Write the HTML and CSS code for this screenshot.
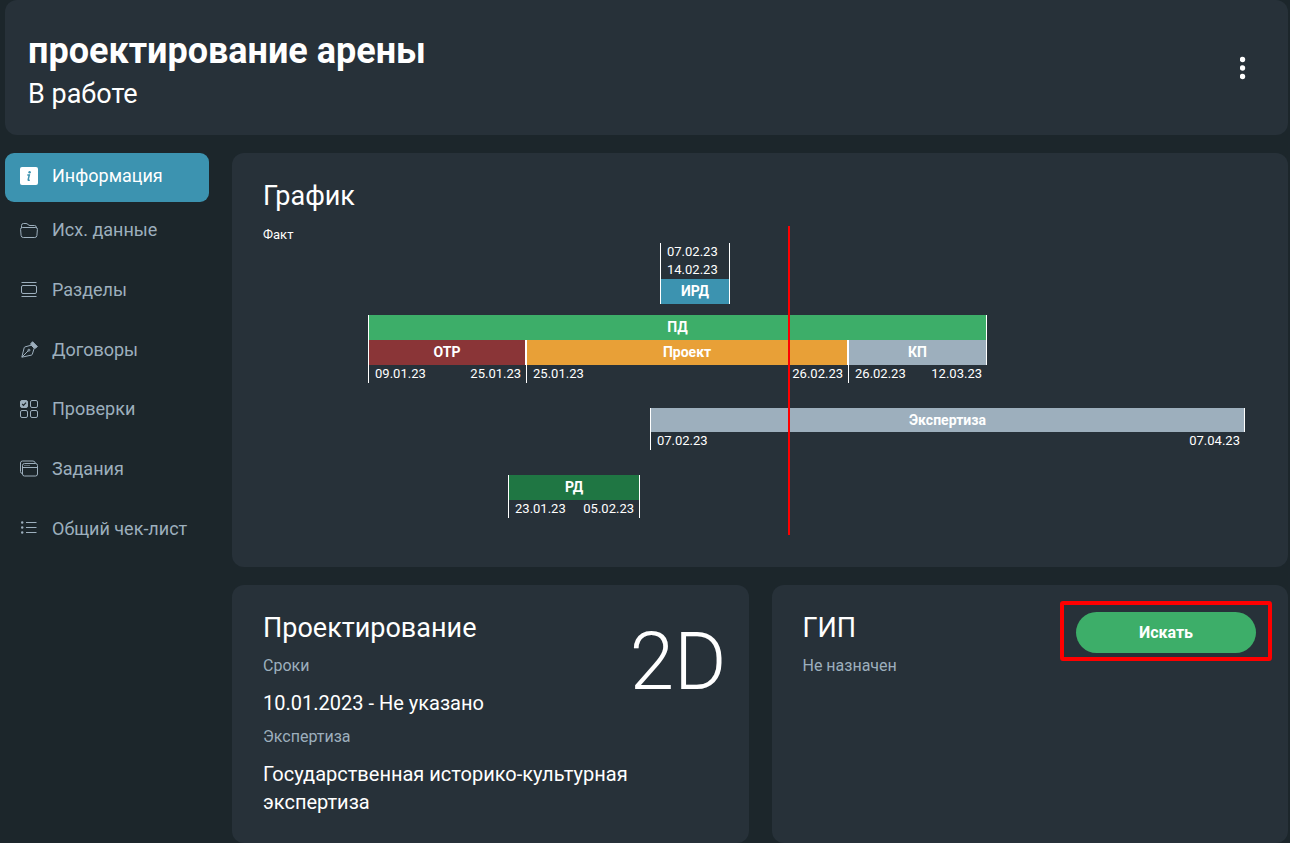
FILE: index.html
```html
<!DOCTYPE html>
<html lang="ru">
<head>
<meta charset="utf-8">
<meta name="viewport" content="width=device-width, initial-scale=1">
<title>проектирование арены</title>
<link rel="stylesheet" href="styles.css">
</head>
<body>
<div class="page">
  <header class="card header">
    <div>
      <h1 class="header-title">проектирование арены</h1>
      <p class="header-status">В работе</p>
    </div>
    <button class="menu-button" type="button" aria-label="Меню">
      <svg width="6" height="24" viewBox="0 0 6 24" fill="currentColor"><circle cx="2.500" cy="3.500" r="2.700"/><circle cx="2.500" cy="12" r="2.700"/><circle cx="2.500" cy="20.500" r="2.700"/></svg>
    </button>
  </header>

  <div class="layout">
    <nav class="nav">
      <a class="nav-item nav-item-active" href="#info">
        <svg class="icon" viewBox="0 0 18 18"><rect width="18" height="18" rx="2" fill="#fff"/><circle cx="9.600" cy="5.300" r="1.200" fill="#3c93b0"/><path d="M7.300 8h2l-1.100 4.600q-.2 1.100 1.500.4" fill="none" stroke="#3c93b0" stroke-width="1.500"/></svg>
        <span>Информация</span>
      </a>
      <a class="nav-item" href="#data">
        <svg class="icon" viewBox="0 0 18 18"><path d="M1.500 7V4.500Q1.500 2.500 3.500 2.500H6Q7 2.500 8 3.500T10 4.500H14.500Q16.500 4.500 16.500 7M2.300 6.500H15.700Q17.600 6.500 17.400 8.500L16.900 14.500Q16.700 16.500 14.700 16.500H3.300Q1.300 16.500 1.100 14.500L.6 8.500Q.4 6.500 2.300 6.500Z"/></svg>
        <span>Исх. данные</span>
      </a>
      <a class="nav-item" href="#sections">
        <svg class="icon" viewBox="0 0 18 18"><path d="M1.500 1.500H16.500M1.500 15.500H16.500"/><rect x="1.500" y="4.500" width="15" height="8" rx="1.500"/></svg>
        <span>Разделы</span>
      </a>
      <a class="nav-item" href="#contracts">
        <svg class="icon" viewBox="0 0 18 18"><path d="M1.800 16.200L4.200 6.700Q4.400 6.100 5 5.900L11.200 4.200L14.200 7.200L12.300 13.300Q12.100 13.900 11.500 14.100ZM2 16L8.500 9.500"/><circle cx="8.900" cy="9.200" r="1"/><path class="solid" d="M10.500 3.200L12.500.7L17.400 5.600L14.900 7.500Z"/></svg>
        <span>Договоры</span>
      </a>
      <a class="nav-item nav-item-short" href="#checks">
        <svg class="icon" viewBox="0 0 18 18"><rect class="solid" x=".5" y=".5" width="7" height="7" rx="1.500"/><path class="cutout" d="M2.200 4L3.500 5.300L6 2.600"/><rect x="10.500" y=".5" width="7" height="7" rx="1.500"/><rect x=".5" y="10.500" width="7" height="7" rx="1.500"/><rect x="10.500" y="10.500" width="7" height="7" rx="1.500"/></svg>
        <span>Проверки</span>
      </a>
      <a class="nav-item" href="#tasks">
        <svg class="icon" viewBox="0 0 18 18"><path d="M2.500 13.500Q.5 13.500.5 11.500V3Q.5 1 2.500 1H13Q15 1 15.500 3.500"/><rect x="2.500" y="3.500" width="15" height="12.500" rx="2"/><path d="M2.500 7.500H17.500M4.500 5.500H5.500M6.500 5.500H7.500M8.500 5.500H9.500"/></svg>
        <span>Задания</span>
      </a>
      <a class="nav-item" href="#checklist">
        <svg class="icon" viewBox="0 0 18 18"><path d="M6 2.500H16.500M6 7.500H16.500M6 12.500H16.500"/><g class="dots"><circle cx="2.200" cy="2.500" r="1.200"/><circle cx="2.200" cy="7.500" r="1.200"/><circle cx="2.200" cy="12.500" r="1.200"/></g></svg>
        <span>Общий чек-лист</span>
      </a>
    </nav>

    <main class="content">
      <section class="card schedule">
        <h2 class="card-title">График</h2>
        <div class="chart">
          <p class="chart-label">Факт</p>
          <div class="stage stage-framed stage-ird" style="margin-left:39.94%;width:7.05%">
            <div class="dates dates-stacked"><span>07.02.23</span><span>14.02.23</span></div>
            <div class="bar bar-blue">ИРД</div>
          </div>
          <div class="stage-group" style="margin-left:10.57%;width:62.27%">
            <div class="bar bar-green bar-first bar-last">ПД</div>
            <div class="stage-parts" style="grid-template-columns:158fr 322fr 139fr">
              <div class="stage">
                <div class="bar bar-red bar-last">ОТР</div>
                <div class="dates"><span>09.01.23</span><span>25.01.23</span></div>
              </div>
              <div class="stage">
                <div class="bar bar-orange bar-last">Проект</div>
                <div class="dates"><span>25.01.23</span><span>26.02.23</span></div>
              </div>
              <div class="stage">
                <div class="bar bar-gray bar-last">КП</div>
                <div class="dates"><span>26.02.23</span><span>12.03.23</span></div>
              </div>
            </div>
          </div>
          <div class="stage stage-later" style="margin-left:38.93%;width:59.86%">
            <div class="bar bar-slim bar-gray bar-last">Экспертиза</div>
            <div class="dates"><span>07.02.23</span><span>07.04.23</span></div>
          </div>
          <div class="stage stage-framed stage-later" style="margin-left:24.65%;width:13.28%">
            <div class="bar bar-dark-green">РД</div>
            <div class="dates"><span>23.01.23</span><span>05.02.23</span></div>
          </div>
          <div class="today" style="left:52.82%"></div>
        </div>
      </section>

      <div class="details">
        <section class="card detail design">
          <div>
            <h2 class="card-title">Проектирование</h2>
            <dl class="facts">
              <dt>Сроки</dt>
              <dd>10.01.2023 - Не указано</dd>
              <dt>Экспертиза</dt>
              <dd>Государственная историко-культурная экспертиза</dd>
            </dl>
          </div>
          <div class="dimension">2D</div>
        </section>
        <section class="card detail manager">
          <div>
            <h2 class="card-title">ГИП</h2>
            <p class="note">Не назначен</p>
          </div>
          <div class="highlight"><button class="search-button" type="button">Искать</button></div>
        </section>
      </div>
    </main>
  </div>
</div>
</body>
</html>
```
FILE: styles.css
```css
* { box-sizing: border-box; }

body {
  margin: 0;
  background: #1c262b;
  color: #fff;
  font-family: Roboto, "Liberation Sans", sans-serif;
}

h1, h2, p, dl, dd { margin: 0; }

.page { padding: 0 2px 0 5px; }

.card {
  background: #273139;
  border-radius: 12px;
}

.header {
  display: flex;
  justify-content: space-between;
  align-items: center;
  padding: 29px 39px 20px 23px;
}

.header-title { font-size: 36px; line-height: 44px; font-weight: 700; }
.header-status { font-size: 27px; line-height: 42px; }

.menu-button {
  display: flex;
  padding: 0 3px 9px;
  border: 0;
  background: none;
  color: #fff;
}

.layout {
  display: grid;
  grid-template-columns: 204px minmax(0, 1fr);
  gap: 23px;
  margin-top: 18px;
}

.nav-item {
  display: flex;
  align-items: center;
  gap: 14px;
  padding: 16px 15px 20px;
  color: #9dafbd;
  font-size: 18px;
  line-height: 24px;
  text-decoration: none;
}
.nav-item-short { padding: 15px 15px 20px; }

.nav-item-active {
  padding: 11px 15px 14px;
  border-radius: 9px;
  background: #3c93b0;
  color: #fff;
}

.icon {
  width: 18px;
  height: 18px;
  fill: none;
  stroke: #9dafbd;
  stroke-width: 1;
}
.nav-item-active .icon { stroke: none; }
.icon .solid { fill: #9dafbd; }
.icon .cutout { stroke: #1c262b; stroke-width: 1.2; }
.icon .dots { fill: #9dafbd; stroke: none; }

.content { display: grid; gap: 18px; }

.card-title { font-size: 27px; line-height: 36px; font-weight: 400; }

.schedule { padding: 25px 31px 32px; }

.chart {
  position: relative;
  margin-top: 12px;
  padding-bottom: 17px;
  font-size: 13px;
  line-height: 18px;
}

.chart-label { height: 17px; }

.stage { border-left: 1px solid #fff; }
.stage-framed { border-right: 1px solid #fff; }
.stage-group { margin-top: 11px; }
.stage-later { margin-top: 25px; }
.stage-parts { display: grid; }

.bar {
  height: 25px;
  font-size: 14px;
  font-weight: 700;
  line-height: 25px;
  text-align: center;
}
.bar-slim { height: 24px; }
.bar-first { border-left: 1px solid #fff; }
.bar-last { border-right: 1px solid #fff; }
.bar-blue { background: #3c93b0; }
.bar-green { background: #3dae69; }
.bar-red { background: #8a3537; }
.bar-orange { background: #e8a037; }
.bar-gray { background: #9dafbd; }
.bar-dark-green { background: #1f7643; }

.dates {
  display: flex;
  justify-content: space-between;
  padding: 0 5px 0 6px;
}
.dates-stacked { flex-direction: column; }

.today {
  position: absolute;
  top: 0;
  bottom: 0;
  width: 2px;
  background: #f00;
}

.details {
  display: grid;
  grid-template-columns: repeat(2, minmax(0, 1fr));
  gap: 23px;
}

.detail {
  display: flex;
  justify-content: space-between;
  align-items: flex-start;
}
.design { padding: 25px 22px 27px 31px; }
.manager { padding: 16px 16px 27px 31px; }
.manager .card-title { margin-top: 9px; }

.facts dt, .note {
  margin-top: 8px;
  color: #9dafbd;
  font-size: 16px;
  line-height: 24px;
}
.facts dd { margin-top: 11px; font-size: 20px; line-height: 28px; }

.dimension {
  margin-top: 12px;
  font-size: 80px;
  font-weight: 300;
  line-height: 80px;
}

.highlight {
  padding: 7px 12px 4px;
  border: 4px solid #f00;
  border-radius: 3px;
}

.search-button {
  display: block;
  width: 180px;
  height: 41px;
  border: 0;
  border-radius: 21px;
  background: #3dae69;
  color: #fff;
  font: 700 16px/24px Roboto, "Liberation Sans", sans-serif;
}
```
